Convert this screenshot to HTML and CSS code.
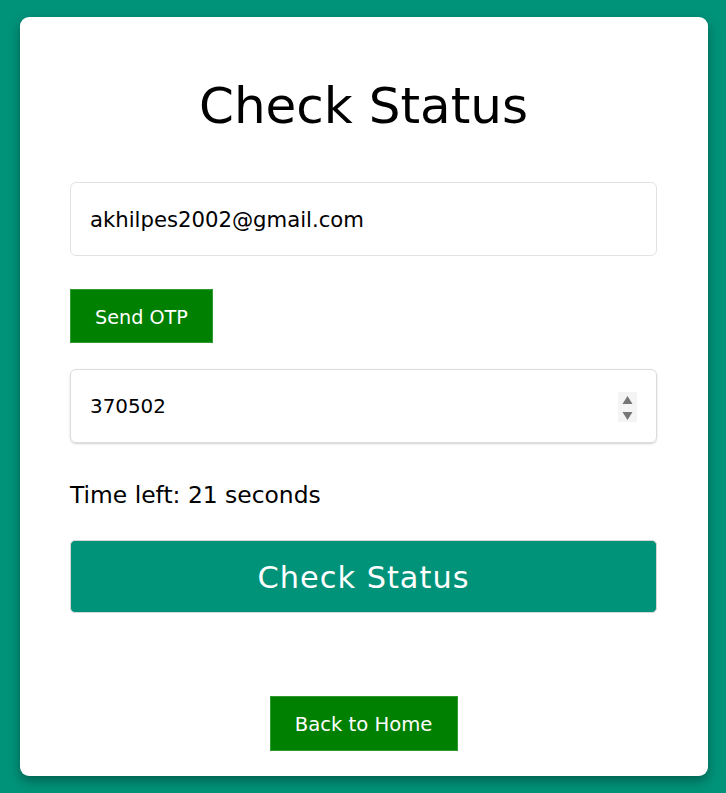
FILE: index.html
```html
<!DOCTYPE html>
<html lang="en">
<head>
<meta charset="utf-8">
<title>Check Status</title>
<link rel="stylesheet" href="styles.css">
</head>
<body>
<div class="page">
  <div class="card">
    <h1 class="title">Check Status</h1>
    <div class="field field-email">akhilpes2002@gmail.com</div>
    <button class="btn-green btn-otp">Send OTP</button>
    <div class="field field-otp">
      <span class="otp-value">370502</span>
      <span class="spinner">
        <svg width="19" height="30" viewBox="0 0 19 30">
          <rect x="0" y="0" width="19" height="30" fill="#f4f4f4"/>
          <polygon points="4.5,12 9.5,4 14.5,12" fill="#767676"/>
          <polygon points="4.5,20 14.5,20 9.5,28" fill="#767676"/>
        </svg>
      </span>
    </div>
    <p class="timer">Time left: 21 seconds</p>
    <button class="btn-check">Check Status</button>
    <div class="home-row">
      <button class="btn-green btn-home">Back to Home</button>
    </div>
  </div>
</div>
</body>
</html>
```

FILE: styles.css
```css
html, body {
  margin: 0;
  padding: 0;
}
body {
  background: #00937a;
  font-family: "DejaVu Sans", "Noto Sans", sans-serif;
  color: #000;
}
.page {
  padding: 17px 18px 17px 20px;
}
.card {
  background: #fff;
  border-radius: 9px;
  box-shadow: 0 5px 12px rgba(0, 0, 0, 0.35);
  height: 759px;
  box-sizing: border-box;
  padding: 59px 51px 0 50px;
  display: flex;
  flex-direction: column;
  align-items: flex-start;
}
.title {
  align-self: stretch;
  margin: 0;
  text-align: center;
  font-size: 50px;
  font-weight: 400;
  line-height: 60px;
  height: 60px;
}
.field {
  align-self: stretch;
  box-sizing: border-box;
  height: 74px;
  border: 1px solid #e2e2e2;
  border-radius: 6px;
  padding: 0 19px;
  display: flex;
  align-items: center;
}
.field-email {
  margin-top: 46px;
  font-size: 21.2px;
}
.btn-green {
  background: #008000;
  color: #fff;
  border: 1px solid #2f9a2f;
  border-radius: 0;
  font-family: inherit;
  padding: 2px 0 0;
  cursor: pointer;
}
.btn-otp {
  margin-top: 33px;
  width: 143px;
  height: 54px;
  font-size: 19.2px;
}
.field-otp {
  margin-top: 26px;
  justify-content: space-between;
  font-size: 19.9px;
  padding-right: 19px;
  border-color: #dcdcdc;
  box-shadow: 0 1px 2px rgba(0, 0, 0, 0.18);
}
.spinner {
  display: flex;
  margin-top: 1px;
}
.timer {
  margin: 37px 0 0;
  font-size: 23.4px;
  line-height: 30px;
  height: 30px;
}
.btn-check {
  align-self: stretch;
  margin-top: 30px;
  height: 73px;
  background: #00937a;
  color: #fff;
  border: 1px solid #d6d6d6;
  border-radius: 5px;
  font-family: inherit;
  font-size: 30.4px;
  letter-spacing: 1px;
  padding: 2px 0 0;
}
.home-row {
  align-self: stretch;
  display: flex;
  justify-content: center;
  margin-top: 83px;
}
.btn-home {
  width: 188px;
  height: 55px;
  font-size: 19.6px;
}
```
